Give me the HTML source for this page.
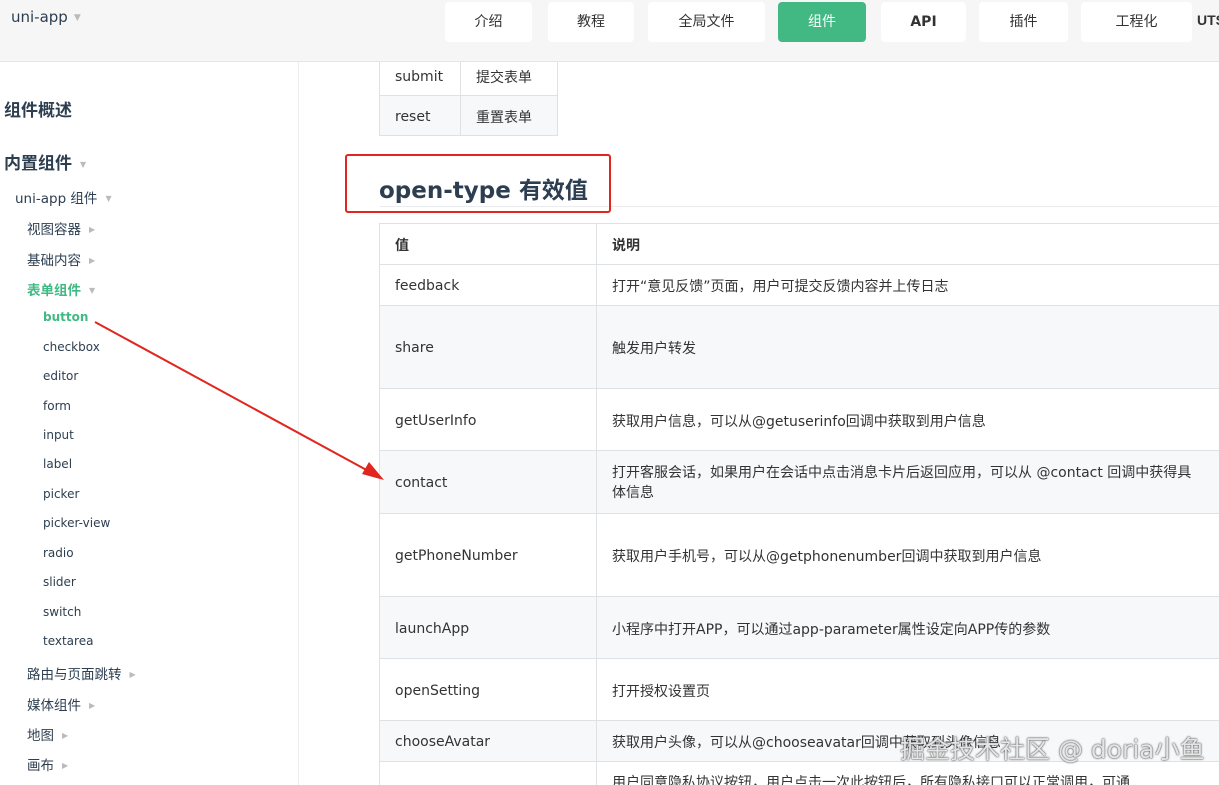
<!DOCTYPE html>
<html><head><meta charset="utf-8"><style>
*{margin:0;padding:0;box-sizing:border-box}
html,body{width:1219px;height:785px;overflow:hidden}
body{position:relative;background:#fff;font-family:"DejaVu Sans","Noto Sans CJK SC",sans-serif;color:#2c3e50}
.top{position:absolute;left:0;top:0;width:1219px;height:62px;background:#f6f6f6;border-bottom:1px solid #e6e6e6;z-index:5}
.logo{position:absolute;left:11px;top:8px;font-size:15px;color:#2c3e50}
.logo span{color:#bbb;font-size:9px;margin-left:6px;vertical-align:2px}
.nb{position:absolute;top:2px;height:40px;background:#fff;border-radius:4px;font-size:14px;color:#333;text-align:center;line-height:40px}
.nb.on{background:#42b983;color:#fff}
.side{position:absolute;left:0;top:62px;width:299px;height:723px;border-right:1px solid #eaecef}
.s{position:absolute;white-space:nowrap;color:#2c3e50}
.h{font-size:17px;font-weight:bold;left:4px}
.l2{font-size:13.5px;left:27px}
.l3{font-size:12px;left:43px}
.car{color:#bbb;font-size:8px;margin-left:8px;vertical-align:2px}
.g{color:#42b983;font-weight:bold}
table{position:absolute;border-collapse:collapse;font-size:14px;color:#333}
td{border:1px solid #dfe2e5;padding:0 15px;vertical-align:middle;padding-top:2px}
.gr td{background:#f6f8fa}
</style></head><body>
<div class="top">
<div class="logo">uni-app<span>▼</span></div>
<div class="nb" style="left:445px;width:87px">介绍</div>
<div class="nb" style="left:548px;width:86px">教程</div>
<div class="nb" style="left:648px;width:117px">全局文件</div>
<div class="nb on" style="left:778px;width:88px">组件</div>
<div class="nb" style="left:881px;width:85px;font-weight:bold">API</div>
<div class="nb" style="left:979px;width:89px">插件</div>
<div class="nb" style="left:1081px;width:111px">工程化</div>
<div style="position:absolute;left:1197px;top:12px;font-size:14px;font-weight:bold;color:#333;font-family:'Liberation Sans',sans-serif">UTS</div>
</div>
<div class="side"></div>
<div class="s h" style="top:96px">组件概述</div>
<div class="s h" style="top:149px">内置组件<span class="car">▼</span></div>
<div class="s" style="left:15px;top:187px;font-size:13.5px">uni-app 组件<span class="car">▼</span></div>
<div class="s l2" style="top:218px">视图容器<span class="car">▶</span></div>
<div class="s l2" style="top:249px">基础内容<span class="car">▶</span></div>
<div class="s l2 g" style="top:279px">表单组件<span class="car" style="font-weight:normal">▼</span></div>
<div class="s l3 g" style="top:310px">button</div>
<div class="s l3" style="top:340px">checkbox</div>
<div class="s l3" style="top:369px">editor</div>
<div class="s l3" style="top:399px">form</div>
<div class="s l3" style="top:428px">input</div>
<div class="s l3" style="top:457px">label</div>
<div class="s l3" style="top:487px">picker</div>
<div class="s l3" style="top:516px">picker-view</div>
<div class="s l3" style="top:546px">radio</div>
<div class="s l3" style="top:575px">slider</div>
<div class="s l3" style="top:605px">switch</div>
<div class="s l3" style="top:634px">textarea</div>
<div class="s l2" style="top:663px">路由与页面跳转<span class="car">▶</span></div>
<div class="s l2" style="top:694px">媒体组件<span class="car">▶</span></div>
<div class="s l2" style="top:724px">地图<span class="car">▶</span></div>
<div class="s l2" style="top:754px">画布<span class="car">▶</span></div>

<table style="left:379px;top:55px;">
<tr style="height:40px"><td style="width:81px">submit</td><td style="width:97px">提交表单</td></tr>
<tr class="gr" style="height:40px"><td>reset</td><td>重置表单</td></tr>
</table>
<div style="position:absolute;left:380px;top:206px;width:839px;border-top:1px solid #eaecef"></div>
<div style="position:absolute;left:379px;top:171px;font-size:23px;font-weight:bold;color:#2c3e50">open-type 有效值</div>
<div style="position:absolute;left:345px;top:154px;width:266px;height:59px;border:2px solid #e0261f;border-radius:3px"></div>

<table style="left:379px;top:223px;width:860px">
<tr style="height:41px"><td style="width:217px;font-weight:bold">值</td><td style="font-weight:bold">说明</td></tr>
<tr style="height:41px"><td>feedback</td><td>打开“意见反馈”页面，用户可提交反馈内容并上传日志</td></tr>
<tr class="gr" style="height:83px"><td>share</td><td>触发用户转发</td></tr>
<tr style="height:62px"><td>getUserInfo</td><td>获取用户信息，可以从@getuserinfo回调中获取到用户信息</td></tr>
<tr class="gr" style="height:63px"><td>contact</td><td style="line-height:20px;padding-right:42px">打开客服会话，如果用户在会话中点击消息卡片后返回应用，可以从 @contact 回调中获得具体信息</td></tr>
<tr style="height:83px"><td>getPhoneNumber</td><td>获取用户手机号，可以从@getphonenumber回调中获取到用户信息</td></tr>
<tr class="gr" style="height:62px"><td>launchApp</td><td>小程序中打开APP，可以通过app-parameter属性设定向APP传的参数</td></tr>
<tr style="height:62px"><td>openSetting</td><td>打开授权设置页</td></tr>
<tr class="gr" style="height:41px"><td>chooseAvatar</td><td>获取用户头像，可以从@chooseavatar回调中获取到头像信息</td></tr>
<tr style="height:41px"><td></td><td style="vertical-align:top;padding-top:10px;white-space:nowrap">用户同意隐私协议按钮，用户点击一次此按钮后，所有隐私接口可以正常调用，可通</td></tr>
</table>
<div style="position:absolute;left:900px;top:730px;font-size:25px;color:rgba(255,255,255,.85);text-shadow:0 0 2px #555,0 0 1px #333;white-space:nowrap">掘金技术社区 @ doria小鱼</div>
<svg style="position:absolute;left:0;top:0" width="1219" height="785">
<line x1="95" y1="322" x2="372" y2="473" stroke="#e0261f" stroke-width="2"/>
<polygon points="384,480 362,474 369,462" fill="#e0261f"/>
</svg>
</body></html>
